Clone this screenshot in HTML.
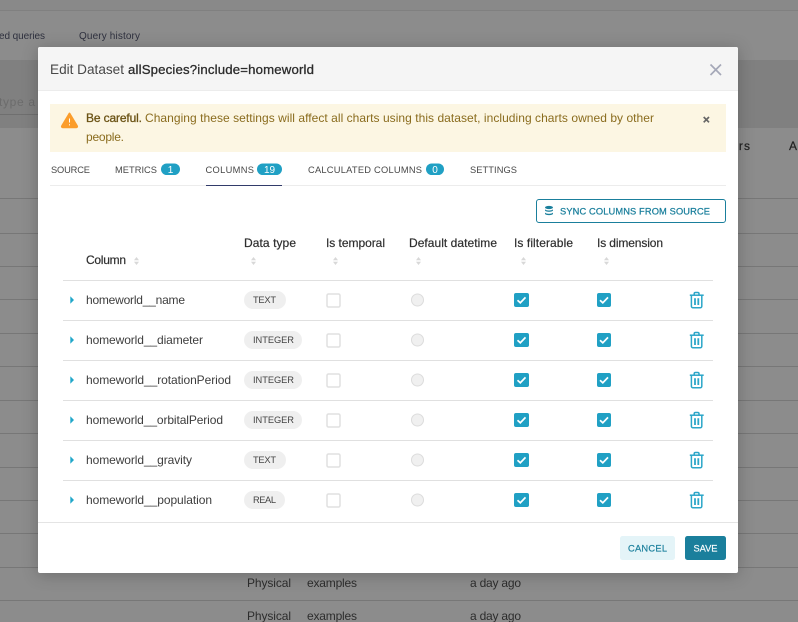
<!DOCTYPE html>
<html><head><meta charset="utf-8"><style>
html,body{margin:0;padding:0;width:798px;height:622px;overflow:hidden;background:#8c8c8c}
svg{display:block}
text{font-family:"Liberation Sans",sans-serif;white-space:pre}
.t{font-size:12px;fill:#3d3d3d}
.h{font-size:12px;fill:#2f2f2f;stroke:#2f2f2f;stroke-width:.2}
.tab{font-size:9.3px;fill:#484848}
.b{font-size:10px;fill:#fff;text-anchor:middle}
.p{font-size:9.3px;fill:#444}
.bg{font-size:12px;fill:#2d2d2d}
</style></head><body>
<svg width="798" height="622" viewBox="0 0 798 622" xmlns="http://www.w3.org/2000/svg">
<defs>
<g id="sort"><path d="M-2.500-.8 0-4 2.500-.8zM-2.500 .8 0 4 2.500 .8z" fill="#d8d8d8"/></g>
<g id="cells">
<path d="M7.300 16.300 11 20 7.300 23.700z" fill="#20a7c9"/>
<rect x="264" y="14" width="13" height="13" rx="1.500" fill="#fff" stroke="#e0e0e0" stroke-width="1.500"/>
<circle cx="354.500" cy="20" r="6" fill="#f0f0f0" stroke="#dcdcdc"/>
<rect x="451" y="13" width="15" height="14" rx="2" fill="#20a0c4"/>
<path d="M454.500 20.200 457.300 22.800 462.500 17.400" fill="none" stroke="#fff" stroke-width="1.700"/>
<rect x="534" y="13" width="14" height="14" rx="2" fill="#20a0c4"/>
<path d="M537 20.200 539.800 22.800 545 17.400" fill="none" stroke="#fff" stroke-width="1.700"/>
<g fill="none" stroke="#2ba6c8" stroke-width="1.500">
<path d="M626.800 15.200H640.700"/>
<path d="M631.200 15V13.800a1.300 1.300 0 0 1 1.300-1.300h2.200a1.300 1.300 0 0 1 1.300 1.300V15"/>
<path d="M628.400 15.500V26.200a1.600 1.600 0 0 0 1.600 1.600h7.200a1.600 1.600 0 0 0 1.600-1.600V15.500"/>
<path d="M632 18.300V25M635.300 18.300V25" stroke-width="1.800"/>
</g>
</g>
</defs>

<!-- page behind backdrop -->
<rect width="798" height="622" fill="#8c8c8c"/>
<rect width="798" height="10" fill="#898989"/>
<rect y="10" width="798" height="1" fill="#808080"/>
<rect y="60" width="798" height="68" fill="#808080"/>
<rect y="114" width="38" height="1" fill="#6f6f6f"/>
<g fill="#777">
<rect y="198" width="798" height="1"/><rect y="233" width="798" height="1"/><rect y="266" width="798" height="1"/><rect y="299" width="798" height="1"/><rect y="333" width="798" height="1"/><rect y="366" width="798" height="1"/><rect y="400" width="798" height="1"/><rect y="433" width="798" height="1"/><rect y="467" width="798" height="1"/><rect y="500" width="798" height="1"/><rect y="533" width="798" height="1"/><rect y="567" width="798" height="1"/><rect y="600" width="798" height="1"/>
</g>
<text x="-1" y="39" style="font-size:10px;fill:#2e303e" textLength="46">ed queries</text>
<text x="79" y="39" style="font-size:10px;fill:#2e303e" textLength="61">Query history</text>
<text x="-1" y="106" style="font-size:12px;fill:#6c6c6c" textLength="36">type a</text>
<text x="731" y="150" class="h" style="fill:#222;stroke:#222" textLength="19">ers</text>
<text x="789" y="150" class="h" style="fill:#222;stroke:#222" textLength="16">Ac</text>
<text class="bg" x="247" y="587" textLength="44">Physical</text>
<text class="bg" x="307" y="587" textLength="50">examples</text>
<text class="bg" x="470" y="587" textLength="51">a day ago</text>
<text class="bg" x="247" y="620" textLength="44">Physical</text>
<text class="bg" x="307" y="620" textLength="50">examples</text>
<text class="bg" x="470" y="620" textLength="51">a day ago</text>

<!-- modal -->
<rect x="38" y="47" width="700" height="526" rx="2" fill="#fff" style="filter:drop-shadow(0 2px 8px rgba(0,0,0,.22))"/>
<path d="M38 91V49a2 2 0 0 1 2-2H736a2 2 0 0 1 2 2V91z" fill="#f5f5f5"/>
<rect x="38" y="90" width="700" height="1" fill="#ececec"/>
<text x="50" y="74" style="font-size:13.600px;fill:#484848" textLength="74">Edit Dataset</text>
<text x="128" y="74" style="font-size:13.200px;fill:#2c2c2c;stroke:#2c2c2c;stroke-width:.3" textLength="186">allSpecies?include=homeworld</text>
<path d="M710.500 64.500 721 75M721 64.500 710.500 75" stroke="#a5a8b8" stroke-width="1.700" fill="none"/>

<!-- alert -->
<rect x="50" y="104" width="676" height="48" fill="#fcf6e3"/>
<path d="M69.500 113.500 77 126a.9.9 0 0 1-.8 1.400H62.800a.9.9 0 0 1-.8-1.400z" fill="#fb9d2b" stroke="#fb9d2b" stroke-width="1.800" stroke-linejoin="round"/>
<path d="M69.500 118.500V122.500M69.500 124.200V125.400" stroke="#fff" stroke-width="1"/>
<text x="86" y="122" style="font-size:12px;fill:#6b5315;stroke:#6b5315;stroke-width:.3" textLength="56">Be careful.</text>
<text x="145" y="122" style="font-size:12px;fill:#8a6c1e" textLength="509">Changing these settings will affect all charts using this dataset, including charts owned by other</text>
<text x="86" y="141" style="font-size:12px;fill:#8a6c1e" textLength="38">people.</text>
<path d="M703.700 117 709 122.300M709 117 703.700 122.300" stroke="#666" stroke-width="1.700"/>

<!-- tabs -->
<rect x="50" y="185" width="676" height="1" fill="#ececec"/>
<rect x="206" y="185" width="76" height="1" fill="#323b6a"/>
<text class="tab" x="51" y="173" textLength="39">SOURCE</text>
<text class="tab" x="115" y="173" textLength="42">METRICS</text>
<rect x="161" y="163.500" width="19" height="11.500" rx="5.750" fill="#20a0c4"/><text class="b" x="170.500" y="173">1</text>
<text class="tab" x="205.500" y="173" textLength="48.500">COLUMNS</text>
<rect x="257" y="163.500" width="25" height="11.500" rx="5.750" fill="#20a0c4"/><text class="b" x="269.500" y="173">19</text>
<text class="tab" x="308" y="173" textLength="114">CALCULATED COLUMNS</text>
<rect x="426" y="163.500" width="18" height="11.500" rx="5.750" fill="#20a0c4"/><text class="b" x="435" y="173">0</text>
<text class="tab" x="470" y="173" textLength="47">SETTINGS</text>

<!-- sync -->
<rect x="536.500" y="199.500" width="189" height="23" rx="2.500" fill="#fff" stroke="#1a7f9c"/>
<g fill="#1a7f9c"><ellipse cx="549" cy="207.500" rx="4" ry="1.600"/><path d="M545 209v1.300c0 .9 1.800 1.500 4 1.500s4-.6 4-1.500V209c0 .9-1.800 1.500-4 1.500s-4-.6-4-1.500zM545 212.300v1.300c0 .9 1.800 1.500 4 1.500s4-.6 4-1.500v-1.300c0 .9-1.800 1.500-4 1.500s-4-.6-4-1.500z"/></g>
<text x="560" y="214.500" style="font-size:9.300px;fill:#1a7f9c;stroke:#1a7f9c;stroke-width:.25" textLength="150">SYNC COLUMNS FROM SOURCE</text>

<!-- table head -->
<text class="h" x="86" y="264" textLength="40">Column</text><use href="#sort" x="136.500" y="261"/>
<text class="h" x="244" y="247" textLength="52">Data type</text><use href="#sort" x="253.500" y="261"/>
<text class="h" x="326" y="247" textLength="59">Is temporal</text><use href="#sort" x="335.500" y="261"/>
<text class="h" x="409" y="247" textLength="88">Default datetime</text><use href="#sort" x="418.500" y="261"/>
<text class="h" x="514" y="247" textLength="59">Is filterable</text><use href="#sort" x="523.500" y="261"/>
<text class="h" x="597" y="247" textLength="66">Is dimension</text><use href="#sort" x="606.500" y="261"/>

<g fill="#e0e0e0">
<rect x="63" y="280" width="650" height="1"/><rect x="63" y="320" width="650" height="1"/><rect x="63" y="360" width="650" height="1"/><rect x="63" y="400" width="650" height="1"/><rect x="63" y="440" width="650" height="1"/><rect x="63" y="480" width="650" height="1"/>
</g>
<use href="#cells" x="63" y="280"/><use href="#cells" x="63" y="320"/><use href="#cells" x="63" y="360"/><use href="#cells" x="63" y="400"/><use href="#cells" x="63" y="440"/><use href="#cells" x="63" y="480"/>

<text class="t" x="86" y="304" textLength="99">homeworld__name</text>
<text class="t" x="86" y="344" textLength="117">homeworld__diameter</text>
<text class="t" x="86" y="384" textLength="145">homeworld__rotationPeriod</text>
<text class="t" x="86" y="424" textLength="137">homeworld__orbitalPeriod</text>
<text class="t" x="86" y="464" textLength="106">homeworld__gravity</text>
<text class="t" x="86" y="504" textLength="126">homeworld__population</text>

<g fill="#efefef">
<rect x="244" y="291" width="42" height="18" rx="9"/>
<rect x="244" y="331" width="58" height="18" rx="9"/>
<rect x="244" y="371" width="58" height="18" rx="9"/>
<rect x="244" y="411" width="58" height="18" rx="9"/>
<rect x="244" y="451" width="42" height="18" rx="9"/>
<rect x="244" y="491" width="41" height="18" rx="9"/>
</g>
<text class="p" x="253" y="303" textLength="23">TEXT</text>
<text class="p" x="253" y="343" textLength="41">INTEGER</text>
<text class="p" x="253" y="383" textLength="41">INTEGER</text>
<text class="p" x="253" y="423" textLength="41">INTEGER</text>
<text class="p" x="253" y="463" textLength="23">TEXT</text>
<text class="p" x="253" y="503" textLength="23">REAL</text>

<!-- footer -->
<rect x="38" y="522" width="700" height="1" fill="#e4e4e4"/>
<rect x="620" y="536" width="55" height="24" rx="2.500" fill="#e4f4f8"/>
<text x="628" y="551.500" style="font-size:9.300px;fill:#1a7f9c;stroke:#1a7f9c;stroke-width:.2" textLength="39">CANCEL</text>
<rect x="685" y="536" width="41" height="24" rx="2.500" fill="#1a7f9c"/>
<text x="693.500" y="551.500" style="font-size:9.300px;fill:#fff;stroke:#fff;stroke-width:.15" textLength="24">SAVE</text>
</svg>
</body></html>
